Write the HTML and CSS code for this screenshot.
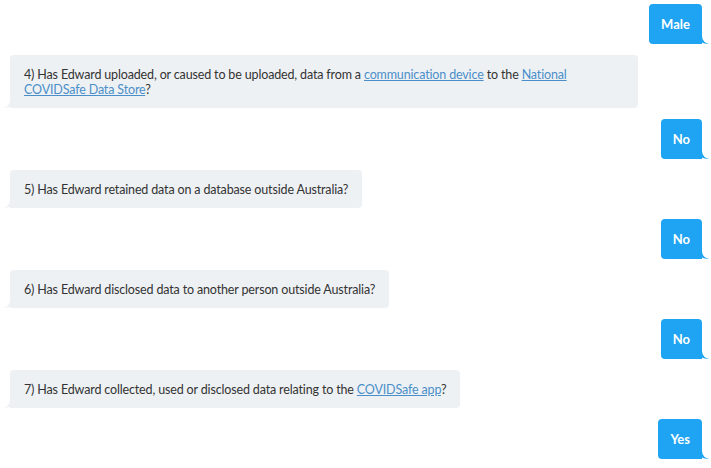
FILE: index.html
```html
<!DOCTYPE html>
<html lang="en">
<head>
<meta charset="utf-8">
<title>Chat</title>
<link rel="stylesheet" href="styles.css">
</head>
<body>
<div class="chat">
  <div class="msg msg-user"><div class="bubble user">Male</div></div>
  <div class="msg msg-bot"><div class="bubble bot wide">4) Has Edward uploaded, or caused to be uploaded, data from a <a href="#">communication device</a> to the <a href="#">National COVIDSafe Data Store</a>?</div></div>
  <div class="msg msg-user"><div class="bubble user">No</div></div>
  <div class="msg msg-bot"><div class="bubble bot">5) Has Edward retained data on a database outside Australia?</div></div>
  <div class="msg msg-user"><div class="bubble user">No</div></div>
  <div class="msg msg-bot"><div class="bubble bot">6) Has Edward disclosed data to another person outside Australia?</div></div>
  <div class="msg msg-user"><div class="bubble user">No</div></div>
  <div class="msg msg-bot"><div class="bubble bot">7) Has Edward collected, used or disclosed data relating to the <a href="#">COVIDSafe app</a>?</div></div>
  <div class="msg msg-user"><div class="bubble user">Yes</div></div>
</div>
</body>
</html>
```
FILE: styles.css
```css
html, body {
  margin: 0;
  padding: 0;
  background: #ffffff;
}
body {
  font-family: "Lato", "Noto Sans", sans-serif;
  font-size: 12.5px;
  letter-spacing: -0.15px;
  line-height: 15px;
  color: #333333;
}
.chat {
  display: flex;
  flex-direction: column;
  gap: 11px;
  padding: 4px 9px 0 10px;
}
.msg {
  display: flex;
}
.msg-user {
  justify-content: flex-end;
}
.msg-bot {
  justify-content: flex-start;
}
.bubble {
  position: relative;
  border-radius: 4px;
}
.bot {
  background: #eef1f4;
  padding: 12px 14px 11px 14px;
  border-bottom-left-radius: 0;
  max-width: 600px;
}
.bot::before {
  content: "";
  position: absolute;
  left: -7px;
  bottom: 0;
  width: 12px;
  height: 10px;
  background: #eef1f4;
  border-bottom-right-radius: 10px 10px;
}
.bot::after {
  content: "";
  position: absolute;
  left: -10px;
  bottom: 0;
  width: 10px;
  height: 10px;
  background: #ffffff;
  border-bottom-right-radius: 8px 8px;
}
.user {
  background: #1ea4f3;
  color: #ffffff;
  font-weight: 700;
  font-size: 13px;
  letter-spacing: 0;
  padding: 13px 12px 12px 12px;
  border-bottom-right-radius: 0;
}
.user::before {
  content: "";
  position: absolute;
  right: -7px;
  bottom: 0;
  width: 12px;
  height: 10px;
  background: #1ea4f3;
  border-bottom-left-radius: 10px 10px;
}
.user::after {
  content: "";
  position: absolute;
  right: -10px;
  bottom: 0;
  width: 10px;
  height: 10px;
  background: #ffffff;
  border-bottom-left-radius: 8px 8px;
}
a {
  color: #4a8fc9;
  text-decoration: underline;
}
```
